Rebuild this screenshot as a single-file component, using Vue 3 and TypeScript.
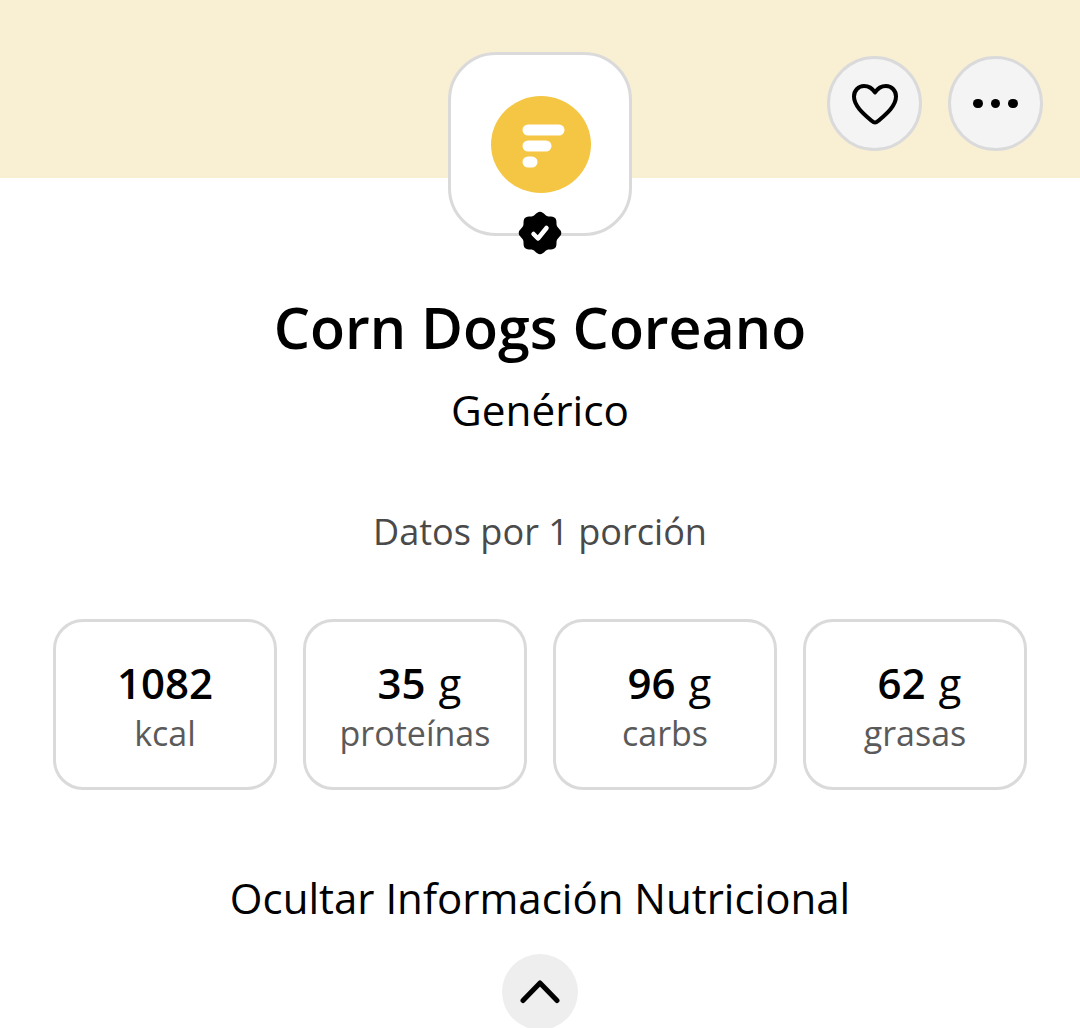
<script setup lang="ts">
const stats = [
  { value: '1082', unit: '', label: 'kcal' },
  { value: '35', unit: 'g', label: 'proteínas' },
  { value: '96', unit: 'g', label: 'carbs' },
  { value: '62', unit: 'g', label: 'grasas' },
]

// wavy 8-lobed seal behind the check mark
const sealPoints: string[] = []
for (let i = 0; i < 96; i++) {
  const a = (i / 96) * Math.PI * 2
  const r = 19.8 + 1.5 * Math.cos(8 * a)
  const x = 22 + r * Math.sin(a)
  const y = 22 - r * Math.cos(a)
  sealPoints.push(`${x.toFixed(2)},${y.toFixed(2)}`)
}
const sealPath = 'M' + sealPoints.join('L') + 'Z'
</script>

<template>
  <div class="page">
    <header class="hero">
      <div class="actions">
        <button class="round" type="button" aria-label="Favorito">
          <svg width="48" height="42" viewBox="0 0 48 42" fill="none">
            <path d="M24 39.5c-1 0-2-.5-3-1.4C14 32 3 23.500 3 13.500 3 7.500 7.500 3 13 3c4.500 0 8.500 2.500 11 6.500C26.500 5.500 30.500 3 35 3c5.500 0 10 4.500 10 10.500 0 10-11 18.500-18 24.600-1 .9-2 1.400-3 1.400z" stroke="#000" stroke-width="4" stroke-linejoin="round" />
          </svg>
        </button>
        <button class="round" type="button" aria-label="Más">
          <span class="dot"></span><span class="dot"></span><span class="dot"></span>
        </button>
      </div>
      <div class="logo-box">
        <svg class="logo" width="100" height="97" viewBox="0 0 100 97">
          <ellipse cx="50" cy="48.500" rx="50" ry="48.500" fill="#f5c644" />
          <rect x="31.500" y="28.500" width="42" height="11" rx="5.500" fill="#fff" />
          <rect x="31.500" y="44.500" width="29" height="11" rx="5.500" fill="#fff" />
          <rect x="31.500" y="60.500" width="15" height="11" rx="5.500" fill="#fff" />
        </svg>
        <svg class="badge" width="44" height="44" viewBox="0 0 44 44">
          <path :d="sealPath" fill="#000" />
          <path d="M15.500 23l4.500 4.500 8.500-10.500" fill="none" stroke="#fff" stroke-width="4.500" stroke-linecap="round" stroke-linejoin="round" />
        </svg>
      </div>
    </header>

    <main class="content">
      <h1 class="title">Corn Dogs Coreano</h1>
      <p class="brand">Genérico</p>
      <p class="serving">Datos por 1 porción</p>

      <div class="stats">
        <div v-for="stat in stats" :key="stat.label" class="stat">
          <div class="amount">
            <strong>{{ stat.value }}</strong><span v-if="stat.unit" class="unit">{{ stat.unit }}</span>
          </div>
          <div class="label">{{ stat.label }}</div>
        </div>
      </div>

      <p class="toggle">Ocultar Información Nutricional</p>
      <button class="collapse" type="button" aria-label="Ocultar">
        <svg width="42" height="26" viewBox="0 0 42 26" fill="none">
          <path d="M4 22.500 21 5 38 22.500" stroke="#000" stroke-width="5" stroke-linecap="round" stroke-linejoin="round" />
        </svg>
      </button>
    </main>
  </div>
</template>

<style>
html,
body {
  background: #fff;
  overflow: hidden;
}
</style>

<style scoped>
.page {
  width: 1080px;
  height: 1028px;
  overflow: hidden;
  font-family: "Open Sans", sans-serif;
  color: #000;
}

.hero {
  position: relative;
  height: 178px;
  background: #f9f0d4;
}

.actions {
  display: flex;
  justify-content: flex-end;
  gap: 26px;
  padding: 56px 37px 0 0;
}

.round {
  width: 95px;
  height: 95px;
  display: flex;
  align-items: center;
  justify-content: center;
  gap: 8px;
  padding: 0;
  border: 3px solid #dadada;
  border-radius: 50%;
  background: #f4f4f4;
}

.dot {
  width: 9.5px;
  height: 9.5px;
  border-radius: 50%;
  background: #000;
}

.logo-box {
  position: absolute;
  left: 448px;
  top: 52px;
  width: 184px;
  height: 184px;
  box-sizing: border-box;
  display: flex;
  align-items: center;
  justify-content: center;
  background: #fff;
  border: 3px solid #dadada;
  border-radius: 48px;
}

.logo {
  margin-left: 1px;
}

.badge {
  position: absolute;
  left: 67px;
  top: 156px;
}

.content {
  display: flex;
  flex-direction: column;
  align-items: center;
}

.title {
  margin: 109px 0 0;
  font-size: 57.3px;
  line-height: 80px;
  font-weight: 600;
}

.brand {
  margin: 14px 0 0;
  font-size: 42.3px;
  line-height: 57px;
}

.serving {
  margin: 69px 0 0;
  font-size: 36.1px;
  line-height: 48px;
  color: #4a4a4a;
}

.stats {
  display: flex;
  gap: 26px;
  margin: 64px 0 0;
}

.stat {
  width: 224px;
  height: 171px;
  box-sizing: border-box;
  padding-top: 33px;
  border: 3px solid #dadada;
  border-radius: 30px;
  text-align: center;
}

.amount {
  font-size: 42px;
  line-height: 55px;
}

.amount strong {
  font-weight: 600;
}

.unit {
  margin-left: 13px;
  margin-right: -9px;
}

.label {
  font-size: 34px;
  line-height: 46px;
  color: #5a5a5a;
}

.toggle {
  margin: 79px 0 0;
  font-size: 42px;
  line-height: 57px;
}

.collapse {
  width: 76px;
  height: 76px;
  margin-top: 28px;
  display: flex;
  align-items: center;
  justify-content: center;
  padding: 0 0 3px;
  border: none;
  border-radius: 50%;
  background: #eeeeee;
}
</style>
